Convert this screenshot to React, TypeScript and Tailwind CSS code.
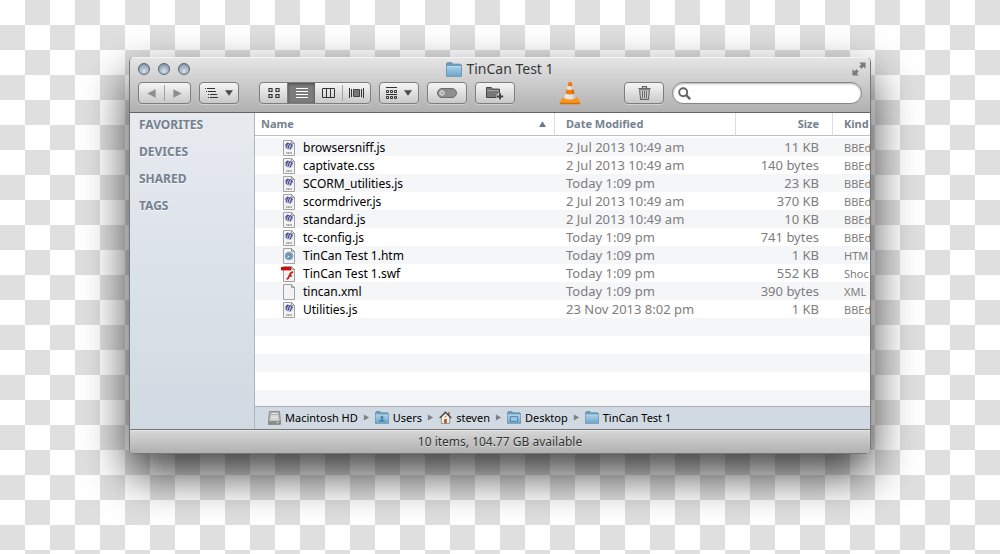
import type { ReactNode } from 'react'

type FileKind = 'bbedit' | 'html' | 'flash' | 'blank'

interface FileEntry {
  name: string
  modified: string
  size: string
  kind: string
  icon: FileKind
}

const SIDEBAR_SECTIONS = ['FAVORITES', 'DEVICES', 'SHARED', 'TAGS']

const FILES: FileEntry[] = [
  { name: 'browsersniff.js', modified: '2 Jul 2013 10:49 am', size: '11 KB', kind: 'BBEd', icon: 'bbedit' },
  { name: 'captivate.css', modified: '2 Jul 2013 10:49 am', size: '140 bytes', kind: 'BBEd', icon: 'bbedit' },
  { name: 'SCORM_utilities.js', modified: 'Today 1:09 pm', size: '23 KB', kind: 'BBEd', icon: 'bbedit' },
  { name: 'scormdriver.js', modified: '2 Jul 2013 10:49 am', size: '370 KB', kind: 'BBEd', icon: 'bbedit' },
  { name: 'standard.js', modified: '2 Jul 2013 10:49 am', size: '10 KB', kind: 'BBEd', icon: 'bbedit' },
  { name: 'tc-config.js', modified: 'Today 1:09 pm', size: '741 bytes', kind: 'BBEd', icon: 'bbedit' },
  { name: 'TinCan Test 1.htm', modified: 'Today 1:09 pm', size: '1 KB', kind: 'HTM', icon: 'html' },
  { name: 'TinCan Test 1.swf', modified: 'Today 1:09 pm', size: '552 KB', kind: 'Shoc', icon: 'flash' },
  { name: 'tincan.xml', modified: 'Today 1:09 pm', size: '390 bytes', kind: 'XML', icon: 'blank' },
  { name: 'Utilities.js', modified: '23 Nov 2013 8:02 pm', size: '1 KB', kind: 'BBEd', icon: 'bbedit' },
]

const EMPTY_ROWS = [0, 1, 2, 3, 4]

const FolderIcon = ({ className, badge }: { className: string; badge?: 'user' | 'desktop' }) => (
  <svg className={className} viewBox="0 0 16 14" preserveAspectRatio="none" aria-hidden="true">
    <defs>
      <linearGradient id="folder" x1="0" y1="0" x2="0" y2="1">
        <stop offset="0" stopColor="#a9cfe9" />
        <stop offset="1" stopColor="#6fa5ca" />
      </linearGradient>
    </defs>
    <path d="M.5 13.3V1.6L1.4.6h4.4l1 1.4h7.8l.9 1v10.3z" fill="#6d9dbf" stroke="#5b87a6" strokeWidth=".8" />
    <path d="M.8 4h14.4v9.1H.8z" fill="url(#folder)" />
    <path d="M.8 4.2h14.4" stroke="#c4e0f2" strokeWidth=".7" />
    {badge === 'user' && <path d="M8 5.2a1.7 1.7 0 0 1 .9 3.1v.8l2.4 1v1.6H4.7v-1.6l2.4-1v-.8A1.7 1.7 0 0 1 8 5.2z" fill="#4c81a8" />}
    {badge === 'desktop' && <path d="M4 6h8v5.2H4z" fill="#9dc5e0" stroke="#4c81a8" />}
  </svg>
)

const DriveIcon = () => (
  <svg className="h-[14px] w-[13px]" viewBox="0 0 13 14" aria-hidden="true">
    <path d="M1.6.6h9.8l1 9.4v3.4H.6V10z" fill="#bdbdbd" stroke="#777" strokeWidth=".8" />
    <rect x="3" y="1.4" width="7" height="1.8" rx=".9" fill="#f5f5f5" stroke="#8a8a8a" strokeWidth=".5" />
    <path d="M3 5h7M2.8 6.6h7.4M2.5 8.2h8" stroke="#f4f4f4" strokeWidth=".9" />
    <path d="M1 10.2h11v2.8H1z" fill="#8a8a8a" />
    <path d="M8.5 11.6h2" stroke="#e8d9a0" />
  </svg>
)

const HomeIcon = () => (
  <svg className="h-[13px] w-[13px]" viewBox="0 0 13 13" aria-hidden="true">
    <path d="M2.3 6 6.5 2l4.2 4v6.4H2.3z" fill="#f5f0e4" stroke="#77736a" strokeWidth=".7" />
    <path d="M9.2 1.2h1.4v3H9.2z" fill="#8c4a35" />
    <path d="M.7 7 6.5 1.3 12.3 7" fill="none" stroke="#4a4744" strokeWidth="1.4" />
    <path d="M5.2 8h2.6v4.4H5.2z" fill="#a4552f" />
    <circle cx="6.5" cy="5.6" r=".9" fill="#c98a4a" />
  </svg>
)

const FileIcon = ({ kind }: { kind: FileKind }) => (
  <svg className="h-4 w-4 shrink-0" viewBox="0 0 16 16" aria-hidden="true">
    <path d="M2.5.5h8l3 3v12h-11z" fill="#f3f3f3" stroke="#a2a2a2" />
    <path d="M10.5.5v3h3z" fill="#dcdcdc" stroke="#8c8c8c" strokeWidth=".8" />
    {kind === 'bbedit' && (
      <>
        <path d="m4 5 2.6-2.8 1.6 1 1.8-.8 2.2 2.6-.6 3-2.4 2-2-.8-1.8.4z" fill="#b9bfdc" />
        <path
          d="M4.2 5.4 6.6 2.8l1.2 1.2M5 8l1.6-4.6M7 8.6l1.6-5M9 9.4l2-4.6M9 3.4l2.6 2.2"
          fill="none"
          stroke="#3a3c7c"
          strokeWidth="1"
        />
        <path d="M5.2 13h5.6" stroke="#888" strokeWidth="1.4" strokeDasharray="1.2 .4" />
      </>
    )}
    {kind === 'html' && (
      <>
        <circle cx="8" cy="8" r="3.8" fill="#5c9ccb" stroke="#8a97a3" strokeWidth=".9" />
        <path d="m10 5.6-1.4 3-2.6 1.8 1.4-3z" fill="#e4eef6" />
        <path d="m10 5.6-1.4 3-1.2-1.2z" fill="#b0503d" />
      </>
    )}
    {kind === 'flash' && (
      <>
        <path d="M0 1h10v3.4H0z" fill="#cf0a0a" />
        <path d="M12.2 6.2c-3 0-3.4 2.4-4.2 4.4-.5 1.4-1 2.4-2.4 2.6M7.8 9.8h3" fill="none" stroke="#c4201c" strokeWidth="1.7" />
      </>
    )}
  </svg>
)

const ConeIcon = () => (
  <svg className="h-6 w-[22px]" viewBox="0 0 22 24" aria-hidden="true">
    <path d="M3.4 16.6h15.2L21.4 21.6l-.6 1.4H1.2L.6 21.6z" fill="#f9951c" />
    <path d="M.6 21.8h20.8l-.6 1.5H1.2z" fill="#d96c06" />
    <path d="M9.5 1.2q1.5-1 3 0L16.9 17q-5.9 3.2-11.8 0z" fill="#e6e6e6" />
    <path d="M9.5 1.2q1.5-1 3 0l1 3.6q-2.5 1-5 0zM7.5 8.2q3.5 1.4 7 0l1.2 4.3q-4.7 2-9.4 0z" fill="#f07d0c" />
    <path d="m12 1 4.9 16q-1.4.9-3 1.2L11.6 1z" fill="#000" opacity=".12" />
  </svg>
)

const DownArrow = () => (
  <svg className="h-[6px] w-[8px]" viewBox="0 0 8 6" aria-hidden="true">
    <path d="M0 .3h8L4 5.8z" fill="#4a4a4a" />
  </svg>
)

const PathArrow = () => (
  <svg className="h-[7px] w-[7px]" viewBox="0 0 7 7" aria-hidden="true">
    <path d="M.9.4 6.1 3.5.9 6.6z" fill="#7b8087" />
  </svg>
)

const GROUP =
  'flex h-[22px] shrink-0 overflow-hidden rounded-[4px] border border-[#7d7d7d] bg-linear-to-b from-[#f6f6f6] to-[#c9c9c9] shadow-[0_1px_0_rgba(255,255,255,0.35)]'

const ToolButton = ({ label, children }: { label: string; children: ReactNode }) => (
  <button type="button" aria-label={label} className={`${GROUP} w-10 items-center justify-center gap-[6px]`}>
    {children}
  </button>
)

const Segment = ({ label, active = false, children }: { label: string; active?: boolean; children: ReactNode }) => (
  <button
    type="button"
    aria-label={label}
    className={`flex flex-1 items-center justify-center ${active ? 'bg-[#7c7c7c] shadow-[inset_0_1px_3px_rgba(0,0,0,0.45)]' : ''}`}
  >
    {children}
  </button>
)

const WindowLight = ({ label }: { label: string }) => (
  <button
    type="button"
    aria-label={label}
    className="h-3 w-3 rounded-full border border-[#5d6670] bg-[radial-gradient(circle_at_50%_70%,#d6e2ee_0%,#a3b3c4_50%,#6f7d8c_100%)]"
  />
)

const Toolbar = () => (
  <header className="border-b border-[#646464] bg-linear-to-b from-[#e6e6e6] to-[#b0b0b0] pb-2 shadow-[inset_0_1px_0_#f4f4f4]">
    <div className="grid h-[25px] grid-cols-[1fr_auto_1fr] items-center px-2 pb-px">
      <div className="flex gap-2">
        <WindowLight label="Close" />
        <WindowLight label="Minimize" />
        <WindowLight label="Zoom" />
      </div>
      <h1 className="flex items-center gap-1 text-[14px] leading-4 text-[#383838]">
        <FolderIcon className="h-[15px] w-4" />
        TinCan Test 1
      </h1>
      <button type="button" aria-label="Full screen" className="-mr-1 justify-self-end">
        <svg className="h-[14px] w-[14px]" viewBox="0 0 14 14" aria-hidden="true">
          <path d="M7.2.4h6.4v6.4l-2-2-2 2-2.4-2.4 2-2zM6.8 13.6H.4V7.2l2 2 2-2 2.4 2.4-2 2z" fill="#7c7c7c" />
        </svg>
      </button>
    </div>

    <div className="flex items-center gap-2 px-2">
      <div className={`${GROUP} w-[53px]`}>
        <Segment label="Back">
          <svg className="h-[9px] w-[9px]" viewBox="0 0 9 9" aria-hidden="true">
            <path d="M8.6.3v8.4L.3 4.5z" fill="#8e8e8e" />
          </svg>
        </Segment>
        <span className="my-[2px] w-px bg-[#a3a3a3]" />
        <Segment label="Forward">
          <svg className="h-[9px] w-[9px]" viewBox="0 0 9 9" aria-hidden="true">
            <path d="M.4.3v8.4l8.3-4.2z" fill="#8e8e8e" />
          </svg>
        </Segment>
      </div>

      <ToolButton label="Path">
        <svg className="h-[11px] w-[14px]" viewBox="0 0 14 11" aria-hidden="true">
          <path d="M0 .5h1M2 .5h8M1 3.5h1M3 3.5h8M3 6.5h1M5 6.5h7M3 9.5h1M5 9.5h8" stroke="#333" />
        </svg>
        <DownArrow />
      </ToolButton>

      <div className={`${GROUP} ml-3 w-28`}>
        <Segment label="Icon view">
          <svg className="h-[10px] w-[12px]" viewBox="0 0 12 10" aria-hidden="true">
            <path d="M1 .5h3v3H1zM8 .5h3v3H8zM1 6.5h3v3H1zM8 6.5h3v3H8z" fill="none" stroke="#333" strokeWidth="1.2" />
          </svg>
        </Segment>
        <span className="w-px bg-[#7c7c7c]" />
        <Segment label="List view" active>
          <svg className="h-[10px] w-[12px]" viewBox="0 0 12 10" aria-hidden="true">
            <path d="M0 .5h12M0 3.5h12M0 6.5h12M0 9.5h12" stroke="#fff" />
          </svg>
        </Segment>
        <Segment label="Column view">
          <svg className="h-[10px] w-[13px]" viewBox="0 0 13 10" aria-hidden="true">
            <path d="M.5.5h12v9H.5zM4.5 0v10M8.5 0v10" fill="none" stroke="#333" />
          </svg>
        </Segment>
        <span className="my-[2px] w-px bg-[#a3a3a3]" />
        <Segment label="Cover Flow">
          <svg className="h-[10px] w-[15px]" viewBox="0 0 15 10" aria-hidden="true">
            <path d="M.5 0v10M2.5 1v8M12.5 1v8M14.5 0v10" stroke="#333" />
            <path d="M4.5 1.5h6v7h-6z" fill="#777" stroke="#444" />
          </svg>
        </Segment>
      </div>

      <ToolButton label="Arrange">
        <svg className="h-[12px] w-[12px]" viewBox="0 0 12 12" aria-hidden="true">
          <path
            d="M.5 3.5h2v2h-2zM4.5 3.5h2v2h-2zM8.5 3.5h2v2h-2zM.5 9.5h2v2h-2zM4.5 9.5h2v2h-2zM8.5 9.5h2v2h-2z"
            fill="none"
            stroke="#333"
          />
          <path d="M0 .5h11M0 7.5h11" stroke="#333" />
        </svg>
        <DownArrow />
      </ToolButton>

      <ToolButton label="Tags">
        <svg className="h-[10px] w-5" viewBox="0 0 20 10" aria-hidden="true">
          <rect x=".5" y=".5" width="19" height="9" rx="4.5" fill="#8e8e8e" stroke="#6a6a6a" />
          <circle cx="5" cy="5" r="2.2" fill="#a8a8a8" stroke="#ededed" />
        </svg>
      </ToolButton>

      <ToolButton label="New folder">
        <svg className="h-[14px] w-[18px]" viewBox="0 0 18 14" aria-hidden="true">
          <path d="M.5 11.5v-10h4.8l1 1.6h7.2v8.4z" fill="#777" stroke="#444" />
          <path d="M1 4.6h12" stroke="#aaa" />
          <path d="M14 7v7M10.5 10.5h7" stroke="#ddd" strokeWidth="4" />
          <path d="M14 7.2v6.4M10.8 10.4h6.4" stroke="#444" strokeWidth="2" />
        </svg>
      </ToolButton>

      <div className="flex flex-1 justify-center">
        <button type="button" aria-label="VLC" className="-my-1">
          <ConeIcon />
        </button>
      </div>

      <ToolButton label="Delete">
        <svg className="h-[14px] w-[13px]" viewBox="0 0 13 14" aria-hidden="true">
          <path d="M4.5 2V.6h4V2M.3 2.5h12.4" fill="none" stroke="#666" strokeWidth="1.2" />
          <path d="M1.6 3.8h9.8l-1 9.6H2.6z" fill="#d0d0d0" stroke="#666" strokeWidth="1.1" />
          <path d="M4.5 5v7M6.5 5v7M8.5 5v7" stroke="#666" />
        </svg>
      </ToolButton>

      <label className="flex h-[22px] w-[190px] items-center gap-1 rounded-full border border-[#868686] bg-white pr-3 pl-[5px] shadow-[inset_0_1px_2px_rgba(0,0,0,0.3)]">
        <svg className="h-[13px] w-[13px] shrink-0" viewBox="0 0 13 13" aria-hidden="true">
          <circle cx="5.2" cy="5.2" r="4" fill="none" stroke="#666" strokeWidth="1.9" />
          <path d="m8.2 8.2 4 4" stroke="#666" strokeWidth="2.4" />
        </svg>
        <input type="search" aria-label="Search" className="w-full min-w-0 bg-transparent text-xs outline-none" />
      </label>
    </div>
  </header>
)

const FileTable = () => (
  <div className="h-[293px] overflow-hidden bg-white">
    <table className="w-full table-fixed border-separate border-spacing-0 text-left text-[13px] leading-4 whitespace-nowrap">
      <colgroup>
        <col />
        <col className="w-[181px]" />
        <col className="w-[97px]" />
        <col className="w-[38px]" />
      </colgroup>
      <thead className="text-[11px] text-[#75828f]">
        <tr className="h-[23px]">
          <th className="border-b border-[#c0c0c0] p-0 pl-[6px]">
            <button type="button" className="flex w-full items-center justify-between pr-2">
              Name
              <svg className="h-[6px] w-[7px]" viewBox="0 0 7 6" aria-hidden="true">
                <path d="M3.5.2 7 6H0z" fill="#6d7986" />
              </svg>
            </button>
          </th>
          <th className="border-b border-l border-b-[#c0c0c0] border-l-[#dedede] p-0 pl-[11px]">Date Modified</th>
          <th className="border-b border-l border-b-[#c0c0c0] border-l-[#dedede] p-0 pr-[13px] text-right">Size</th>
          <th className="overflow-hidden border-b border-l border-b-[#c0c0c0] border-l-[#dedede] p-0 pl-[11px]">Kind</th>
        </tr>
      </thead>
      <tbody className="text-[#7d7d7d] before:block before:h-[2px]">
        {FILES.map((file) => (
          <tr key={file.name} className="h-[18px] odd:bg-[#f4f6f8]">
            <td className="p-0 pt-[2px] pl-[26px]">
              <span className="flex items-center gap-[6px] text-[12px] text-black">
                <FileIcon kind={file.icon} />
                {file.name}
              </span>
            </td>
            <td className="p-0 py-px pl-3">{file.modified}</td>
            <td className="p-0 py-px pr-[13px] text-right">{file.size}</td>
            <td className="overflow-hidden p-0 pt-[2px] pl-3 text-[11px]">{file.kind}</td>
          </tr>
        ))}
        {EMPTY_ROWS.map((row) => (
          <tr key={row} className="h-[18px] odd:bg-[#f4f6f8]">
            <td colSpan={4} className="p-0" />
          </tr>
        ))}
      </tbody>
    </table>
  </div>
)

const Crumb = ({ icon, label }: { icon: ReactNode; label: string }) => (
  <a href="#" className="flex items-center gap-1">
    {icon}
    {label}
  </a>
)

const PathBar = () => (
  <nav
    aria-label="Path"
    className="flex h-[23px] items-center gap-[5px] border-t border-[#a9adb3] bg-[#d1d9e2] pb-px pl-[13px] text-[11px] leading-4 text-black"
  >
    <Crumb icon={<DriveIcon />} label="Macintosh HD" />
    <PathArrow />
    <Crumb icon={<FolderIcon className="h-[13px] w-[14px]" badge="user" />} label="Users" />
    <PathArrow />
    <Crumb icon={<HomeIcon />} label="steven" />
    <PathArrow />
    <Crumb icon={<FolderIcon className="h-[13px] w-[14px]" badge="desktop" />} label="Desktop" />
    <PathArrow />
    <Crumb icon={<FolderIcon className="h-[13px] w-[14px]" />} label="TinCan Test 1" />
  </nav>
)

export default function App() {
  return (
    <div className="min-h-screen bg-[conic-gradient(#dfdfdf_25%,#fff_0_50%,#dfdfdf_0_75%,#fff_0)] bg-[length:50px_50px] px-[129px] pt-[57px] pb-[100px] font-['Noto_Sans','Open_Sans',sans-serif]">
      <main className="overflow-hidden rounded-[5px] border border-t-0 border-[#777] shadow-[0_20px_45px_rgba(0,0,0,0.75)]">
        <Toolbar />
        <div className="flex">
          <aside className="flex w-[125px] shrink-0 flex-col gap-[11px] border-r border-[#b4b4b4] bg-linear-to-b from-[#e7ebf0] to-[#d1d9e2] pt-1 pl-[9px]">
            {SIDEBAR_SECTIONS.map((section) => (
              <h2 key={section} className="text-[12px] leading-4 font-bold text-[#74818e] [text-shadow:0_1px_0_rgba(255,255,255,0.7)]">
                {section}
              </h2>
            ))}
          </aside>
          <div className="min-w-0 flex-1">
            <FileTable />
            <PathBar />
          </div>
        </div>
        <footer className="h-[24px] border-t border-[#777] bg-linear-to-b from-[#d8d8d8] to-[#b0b0b0] text-center text-[12px] leading-[23px] text-[#333] shadow-[inset_0_1px_0_#e6e6e6] [text-shadow:0_1px_0_rgba(255,255,255,0.5)]">
          10 items, 104.77 GB available
        </footer>
      </main>
    </div>
  )
}
